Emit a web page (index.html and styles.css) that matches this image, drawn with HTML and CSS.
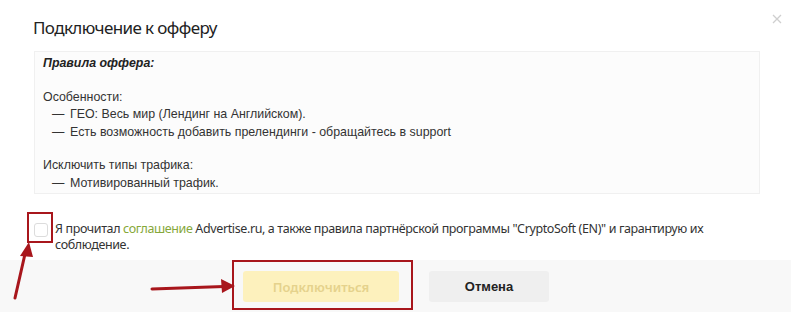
FILE: index.html
```html
<!DOCTYPE html>
<html lang="ru">
<head>
<meta charset="utf-8">
<title>Подключение к офферу</title>
<link rel="stylesheet" href="styles.css">
</head>
<body>
<div class="modal">
  <div class="header">
    <h1 class="title">Подключение к офферу</h1>
    <button class="close" aria-label="Закрыть">
      <svg width="10" height="10" viewBox="0 0 10 10"><path d="M1 1L9 9M9 1L1 9" stroke="#cfcfcf" stroke-width="1.3"/></svg>
    </button>
  </div>
  <div class="rules">
    <p class="rules-title">Правила оффера:</p>
    <div class="group">
      <div class="line">Особенности:</div>
      <div class="item"><span class="dash">—</span>ГЕО: Весь мир (Лендинг на Английском).</div>
      <div class="item"><span class="dash">—</span>Есть возможность добавить прелендинги - обращайтесь в support</div>
    </div>
    <div class="group">
      <div class="line">Исключить типы трафика:</div>
      <div class="item"><span class="dash">—</span>Мотивированный трафик.</div>
    </div>
  </div>
  <label class="agree">
    <span class="checkbox"></span>
    <span class="agree-text">Я прочитал <a class="link" href="#">соглашение</a> Advertise.ru, а также правила партнёрской программы "CryptoSoft (EN)" и гарантирую их<br>соблюдение.</span>
  </label>
  <div class="footer">
    <button class="btn btn-primary" disabled>Подключиться</button>
    <button class="btn btn-cancel">Отмена</button>
  </div>
</div>
<svg class="annotations" width="791" height="312" viewBox="0 0 791 312">
  <rect x="28" y="213" width="24" height="29" fill="none" stroke="#a8161c" stroke-width="2"/>
  <rect x="233" y="261" width="179" height="48" fill="none" stroke="#a8161c" stroke-width="2"/>
  <path d="M15 298L25 254" stroke="#a8161c" stroke-width="3" stroke-linecap="round"/>
  <path d="M29 242L20 256L33 257Z" fill="#a8161c"/>
  <path d="M152 289L224 286.5" stroke="#a8161c" stroke-width="3" stroke-linecap="round"/>
  <path d="M235 286L221 279L222 293Z" fill="#a8161c"/>
</svg>
</body>
</html>
```
FILE: styles.css
```css
html, body {
  margin: 0;
  padding: 0;
  background: #ffffff;
}
body {
  width: 791px;
  height: 312px;
  overflow: hidden;
  position: relative;
  font-family: "Liberation Sans", Arial, sans-serif;
  color: #222;
}
.modal {
  display: flex;
  flex-direction: column;
}
.header {
  display: flex;
  justify-content: space-between;
  align-items: flex-start;
  padding: 15px 9px 0 33px;
  box-sizing: border-box;
  height: 51px;
}
.title {
  margin: 2px 0 0 0;
  font-family: "Noto Sans", "Open Sans", sans-serif;
  font-weight: 400;
  font-size: 17px;
  letter-spacing: -0.6px;
  line-height: 22px;
  color: #222;
}
.close {
  border: 0;
  background: none;
  padding: 0;
  margin-top: -1px;
  width: 10px;
  height: 10px;
  display: block;
}
.close svg { display: block; }
.rules {
  margin: 0 31px 0 34px;
  background: #fcfcfc;
  border: 1px solid #f0f0f0;
  padding: 3px 9px 0 8px;
  box-sizing: border-box;
  height: 143px;
  font-size: 12.4px;
  line-height: 17.5px;
  color: #333;
}
.rules-title {
  margin: 0;
  font-weight: bold;
  font-style: italic;
  color: #222;
}
.group {
  margin-top: 16px;
}
.item {
  display: flex;
  padding-left: 9px;
}
.dash {
  width: 18px;
  flex: none;
}
.agree {
  display: flex;
  align-items: flex-start;
  margin: 27px 40px 0 34px;
  font-family: "Noto Sans", "Open Sans", sans-serif;
  font-size: 12.5px;
  letter-spacing: -0.38px;
  line-height: 16px;
  color: #333;
}
.checkbox {
  flex: none;
  width: 12px;
  height: 12px;
  border: 1px solid #dcdcdc;
  border-radius: 3px;
  background: #fff;
  margin-top: 2px;
  margin-right: 7px;
}
.link {
  color: #86a83a;
  text-decoration: none;
}
.footer {
  margin-top: 7px;
  background: #f8f8f8;
  height: 52px;
  display: flex;
  align-items: flex-start;
  padding: 11px 0 0 243px;
  gap: 30px;
}
.btn {
  height: 31px;
  border: 0;
  border-radius: 3px;
  font-size: 13px;
  padding: 0;
}
.btn-primary {
  width: 156px;
  background: #fdf1bd;
  color: #e5d28c;
  font-family: "Noto Sans", "Open Sans", sans-serif;
  font-weight: 600;
}
.btn-cancel {
  width: 120px;
  background: #efefef;
  color: #222;
  font-family: "Liberation Sans", Arial, sans-serif;
  font-weight: bold;
}
.annotations {
  position: absolute;
  left: 0;
  top: 0;
  pointer-events: none;
}
```
